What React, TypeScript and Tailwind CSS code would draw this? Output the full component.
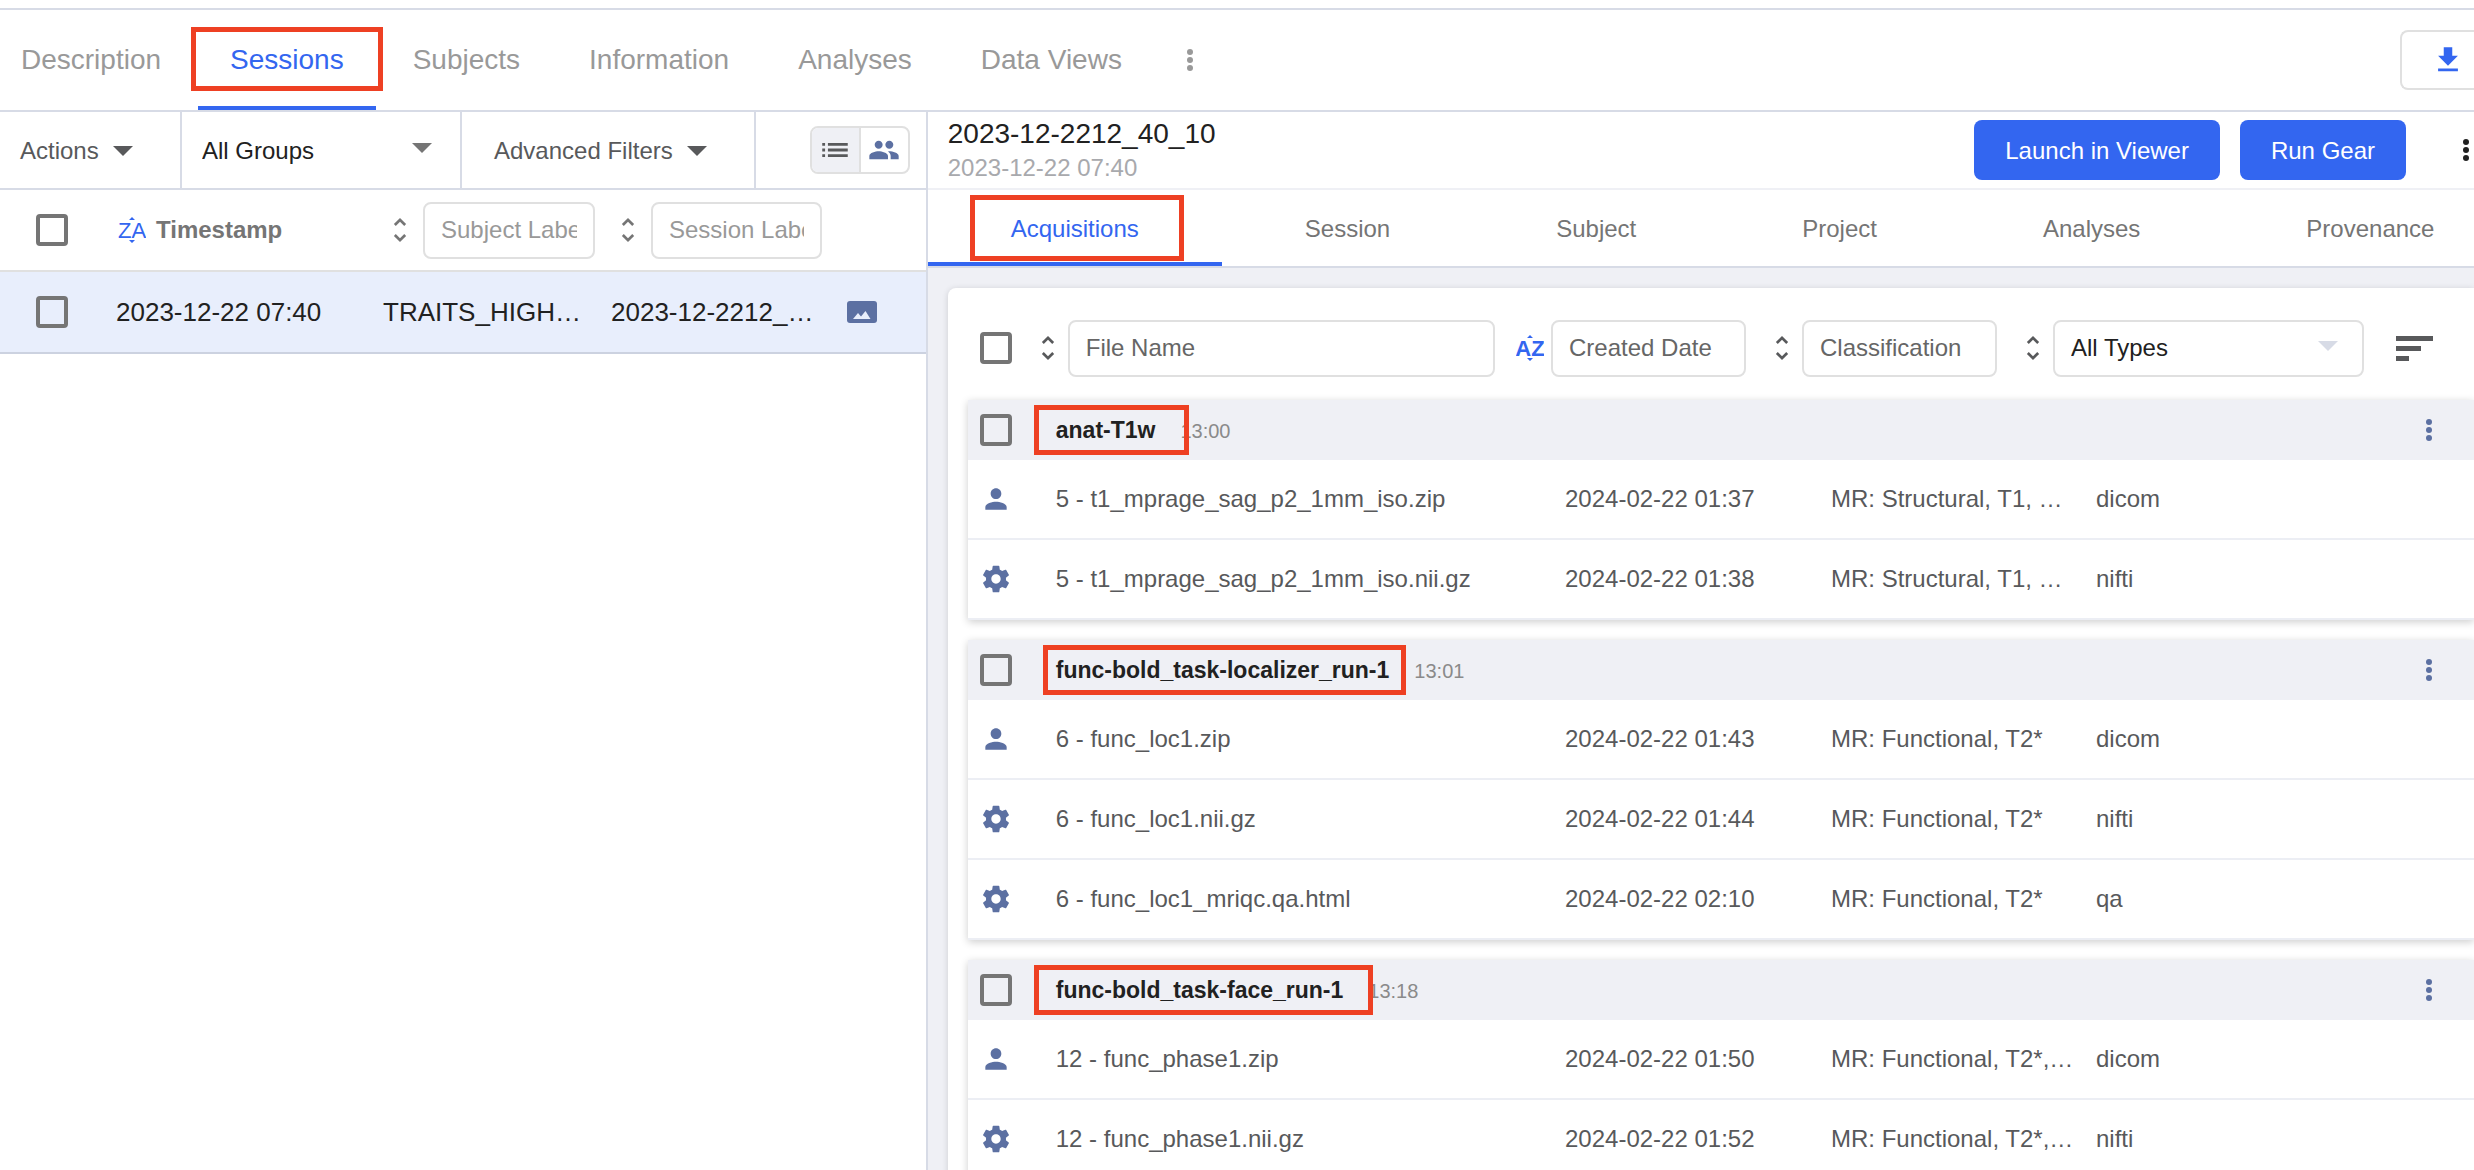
import React from "react";
import { MdList, MdPeople, MdPerson } from "react-icons/md";

type FileRow = {
  source: "user" | "gear";
  name: string;
  created: string;
  classification: string;
  type: string;
};

type Acquisition = {
  label: string;
  time: string;
  mark: string;
  files: FileRow[];
};

const projectTabs = ["Description", "Sessions", "Subjects", "Information", "Analyses", "Data Views"];
const sessionTabs = ["Acquisitions", "Session", "Subject", "Project", "Analyses", "Provenance"];

const acquisitions: Acquisition[] = [
  {
    label: "anat-T1w",
    time: "13:00",
    mark: "-left-[22px] -right-[34px]",
    files: [
      { source: "user", name: "5 - t1_mprage_sag_p2_1mm_iso.zip", created: "2024-02-22 01:37", classification: "MR: Structural, T1, …", type: "dicom" },
      { source: "gear", name: "5 - t1_mprage_sag_p2_1mm_iso.nii.gz", created: "2024-02-22 01:38", classification: "MR: Structural, T1, …", type: "nifti" },
    ],
  },
  {
    label: "func-bold_task-localizer_run-1",
    time: "13:01",
    mark: "-left-[13px] -right-[17px]",
    files: [
      { source: "user", name: "6 - func_loc1.zip", created: "2024-02-22 01:43", classification: "MR: Functional, T2*", type: "dicom" },
      { source: "gear", name: "6 - func_loc1.nii.gz", created: "2024-02-22 01:44", classification: "MR: Functional, T2*", type: "nifti" },
      { source: "gear", name: "6 - func_loc1_mriqc.qa.html", created: "2024-02-22 02:10", classification: "MR: Functional, T2*", type: "qa" },
    ],
  },
  {
    label: "func-bold_task-face_run-1",
    time: "13:18",
    mark: "-left-[22px] -right-[30px]",
    files: [
      { source: "user", name: "12 - func_phase1.zip", created: "2024-02-22 01:50", classification: "MR: Functional, T2*,…", type: "dicom" },
      { source: "gear", name: "12 - func_phase1.nii.gz", created: "2024-02-22 01:52", classification: "MR: Functional, T2*,…", type: "nifti" },
    ],
  },
];

function Dots({ className = "" }: { className?: string }) {
  return (
    <svg viewBox="0 0 8 24" className={`h-6 w-2 fill-current ${className}`} aria-hidden="true">
      <circle cx="4" cy="4" r="3" />
      <circle cx="4" cy="12" r="3" />
      <circle cx="4" cy="20" r="3" />
    </svg>
  );
}

function Caret({ className = "" }: { className?: string }) {
  return (
    <svg viewBox="0 0 20 10" className={`h-[10px] w-5 fill-current ${className}`} aria-hidden="true">
      <path d="M0 0h20L10 10z" />
    </svg>
  );
}

function SortButton({ label, tone }: { label: string; tone: string }) {
  return (
    <button aria-label={label} className={`shrink-0 ${tone}`}>
      <svg viewBox="7 3 10 18" className="h-6 w-[14px] fill-current" aria-hidden="true">
        <path d="M12 5.83L15.17 9l1.41-1.41L12 3 7.41 7.59 8.83 9 12 5.83zm0 12.34L8.83 15l-1.41 1.41L12 21l4.59-4.59L15.17 15 12 18.17z" />
      </svg>
    </button>
  );
}

function AlphaSort({ letters, label, weight }: { letters: string; label: string; weight: string }) {
  return (
    <button aria-label={label} className="shrink-0 text-[#3366f0]">
      <svg viewBox="0 0 28 26" className="h-[26px] w-7 fill-current" aria-hidden="true">
        <path d="M11 3h6l-3-3zM11 23h6l-3 3z" />
        <text x="14" y="21" textAnchor="middle" className={`text-[22px] ${weight}`}>
          {letters}
        </text>
      </svg>
    </button>
  );
}

function Gear() {
  return (
    <svg viewBox="0 0 24 24" className="size-8 fill-current" aria-hidden="true">
      <path d="M19.43 12.98c.04-.32.07-.64.07-.98s-.03-.66-.07-.98l2.11-1.65c.19-.15.24-.42.12-.64l-2-3.46c-.12-.22-.39-.3-.61-.22l-2.49 1c-.52-.4-1.08-.73-1.69-.98l-.38-2.65C14.46 2.18 14.25 2 14 2h-4c-.25 0-.46.18-.49.42l-.38 2.65c-.61.25-1.17.59-1.69.98l-2.49-1c-.23-.09-.49 0-.61.22l-2 3.46c-.13.22-.07.49.12.64l2.11 1.65c-.04.32-.07.65-.07.98s.03.66.07.98l-2.11 1.65c-.19.15-.24.42-.12.64l2 3.46c.12.22.39.3.61.22l2.49-1c.52.4 1.08.73 1.69.98l.38 2.65c.03.24.24.42.49.42h4c.25 0 .46-.18.49-.42l.38-2.65c.61-.25 1.17-.59 1.69-.98l2.49 1c.23.09.49 0 .61-.22l2-3.46c.12-.22.07-.49-.12-.64l-2.11-1.65zM12 15.5c-1.93 0-3.5-1.57-3.5-3.5s1.57-3.5 3.5-3.5 3.5 1.57 3.5 3.5-1.57 3.5-3.5 3.5z" />
    </svg>
  );
}

function Checkbox({ label }: { label: string }) {
  return (
    <input
      type="checkbox"
      aria-label={label}
      className="block size-8 shrink-0 appearance-none rounded border-4 border-[#757575] checked:bg-[#757575]"
    />
  );
}

function FilterInput({ label, className }: { label: string; className: string }) {
  return (
    <input
      type="text"
      aria-label={label}
      placeholder={label}
      className={`h-[57px] rounded-lg border-2 border-[#e0e0e0] bg-white px-4 text-2xl text-[#212121] ${className}`}
    />
  );
}

function TopBar() {
  return (
    <header className="flex h-[104px] shrink-0 items-stretch border-y-2 border-[#d7dbe6]">
      <nav className="flex grow gap-[5px] text-[28px]">
        {projectTabs.map((tab) => {
          const active = tab === "Sessions";
          const first = tab === "Description";
          return (
            <a
              key={tab}
              href="#"
              className={`relative flex items-center border-b-4 pt-1 pr-8 ${first ? "pl-[21px]" : "pl-8"} ${
                active ? "border-[#3366f0] text-[#3366f0]" : "border-transparent text-[#999999]"
              }`}
            >
              {tab}
              {active && (
                <span className="pointer-events-none absolute -inset-x-[7px] top-[17px] h-16 border-5 border-[#ee4023]" />
              )}
            </a>
          );
        })}
        <button aria-label="More tabs" className="ml-[27px] text-[#999999]">
          <Dots />
        </button>
      </nav>
      <button
        aria-label="Download"
        className="flex h-[60px] w-[74px] items-center self-center rounded-l-lg border-2 border-r-0 border-[#e0e0e0] pl-[29px] text-[#3366f0]"
      >
        <svg viewBox="0 0 24 24" className="size-[34px] shrink-0 fill-current" aria-hidden="true">
          <path d="M19 9h-4V3H9v6H5l7 7 7-7zM5 18v2h14v-2H5z" />
        </svg>
      </button>
    </header>
  );
}

function SessionList() {
  return (
    <section className="w-3/8 shrink-0 border-r-2 border-[#d7dbe6]">
      <div className="flex h-[78px] border-b-2 border-[#d7dbe6] text-2xl text-[#58595b]">
        <button className="flex w-[182px] items-center gap-[14px] border-r-2 border-[#d7dbe6] pt-0.5 pl-5">
          Actions <Caret />
        </button>
        <label className="grid w-[280px] items-center border-r-2 border-[#d7dbe6]">
          <select
            aria-label="Group filter"
            className="col-start-1 row-start-1 h-full appearance-none bg-transparent pt-0.5 pl-5 text-[#212121]"
          >
            <option>All Groups</option>
          </select>
          <Caret className="pointer-events-none col-start-1 row-start-1 mr-7 mb-1 justify-self-end text-[#757575]" />
        </label>
        <button className="flex w-[294px] items-center gap-[14px] border-r-2 border-[#d7dbe6] pt-0.5 pl-8">
          Advanced Filters <Caret />
        </button>
        <div className="flex grow items-center justify-end pr-4">
          <div className="flex h-12 overflow-hidden rounded-lg border-2 border-[#e0e0e0]">
            <button aria-label="List view" className="flex w-[49px] items-center justify-center border-r-2 border-[#e0e0e0] bg-[#eff0f5]">
              <MdList className="size-[34px]" />
            </button>
            <button aria-label="Subject view" className="flex w-[47px] items-center justify-center text-[#5c70a2]">
              <MdPeople className="size-8" />
            </button>
          </div>
        </div>
      </div>

      <table className="w-full table-fixed border-separate border-spacing-0 text-left">
        <colgroup>
          <col className="w-[116px]" />
          <col className="w-[267px]" />
          <col className="w-[228px]" />
          <col className="w-[236px]" />
          <col />
        </colgroup>
        <thead>
          <tr className="h-[82px] *:border-b-2 *:border-[#e0e0e0]">
            <th className="pl-9">
              <Checkbox label="Select all sessions" />
            </th>
            <th>
              <div className="flex items-center gap-[10px] pl-[2px] text-2xl text-[#757575]">
                <AlphaSort letters="ZA" label="Sort by timestamp" weight="font-normal" />
                Timestamp
              </div>
            </th>
            <th>
              <div className="flex items-center gap-4 pl-[10px] font-normal">
                <SortButton label="Sort by subject" tone="text-[#757575]" />
                <FilterInput label="Subject Label" className="w-[172px] placeholder:text-[#999999]" />
              </div>
            </th>
            <th>
              <div className="flex items-center gap-4 pl-[10px] font-normal">
                <SortButton label="Sort by session" tone="text-[#757575]" />
                <FilterInput label="Session Label" className="w-[171px] placeholder:text-[#999999]" />
              </div>
            </th>
            <th />
          </tr>
        </thead>
        <tbody>
          <tr className="h-[82px] bg-[#e8eefc] text-[26px] whitespace-nowrap text-[#212121] *:border-b-2 *:border-[#ccd2e0]">
            <td className="pl-9">
              <Checkbox label="Select session 2023-12-2212_40_10" />
            </td>
            <td>2023-12-22 07:40</td>
            <td>TRAITS_HIGH…</td>
            <td>2023-12-2212_…</td>
            <td>
              <svg viewBox="0 0 30 22" className="h-[22px] w-[30px]" aria-label="Has images">
                <rect width="30" height="22" rx="3" fill="#5c70a2" />
                <path d="M6 18l5-6 3 3.500 4.500-5.500 5 8z" fill="#e8eefc" />
              </svg>
            </td>
          </tr>
        </tbody>
      </table>
    </section>
  );
}

function FileFilters() {
  return (
    <div className="flex h-28 items-center pt-2 pr-[41px] pl-8 text-[#58595b]">
      <Checkbox label="Select all files" />
      <div className="ml-[29px] flex grow items-center gap-[13px]">
        <SortButton label="Sort by file name" tone="text-[#58595b]" />
        <FilterInput label="File Name" className="min-w-0 grow placeholder:text-[#666666]" />
      </div>
      <div className="ml-[21px] flex items-center gap-[7px]">
        <AlphaSort letters="AZ" label="Sort by created date" weight="font-bold" />
        <FilterInput label="Created Date" className="w-[195px] placeholder:text-[#666666]" />
      </div>
      <div className="ml-[29px] flex items-center gap-[13px]">
        <SortButton label="Sort by classification" tone="text-[#58595b]" />
        <FilterInput label="Classification" className="w-[195px] placeholder:text-[#666666]" />
      </div>
      <div className="ml-[29px] flex items-center gap-[13px]">
        <SortButton label="Sort by type" tone="text-[#58595b]" />
        <label className="grid w-[311px] items-center">
          <select
            aria-label="File type"
            className="col-start-1 row-start-1 h-[57px] appearance-none rounded-lg border-2 border-[#e0e0e0] bg-white px-4 text-2xl text-[#212121]"
          >
            <option>All Types</option>
          </select>
          <Caret className="pointer-events-none col-start-1 row-start-1 mr-[26px] mb-1 justify-self-end text-[#d7dbe6]" />
        </label>
      </div>
      <button aria-label="Sort options" className="ml-8">
        <svg viewBox="0 0 37 25" className="h-[25px] w-[37px] fill-current" aria-hidden="true">
          <path d="M0 0h37v5H0zM0 10h25v5H0zM0 20h13v5H0z" />
        </svg>
      </button>
    </div>
  );
}

function AcquisitionGroup({ group }: { group: Acquisition }) {
  return (
    <section className="mb-5 ml-5 shadow-[0_2px_8px_rgba(0,0,0,0.2)]">
      <div className="flex h-[60px] items-center bg-[#eff0f5] pr-[41px] pl-3">
        <Checkbox label={`Select ${group.label}`} />
        <div className="ml-11 flex grow items-baseline gap-[25px]">
          <h2 className="relative text-[23px] font-bold text-[#212121]">
            {group.label}
            <span className={`pointer-events-none absolute -inset-y-2 border-5 border-[#ee4023] ${group.mark}`} />
          </h2>
          <span className="text-xl text-[#8a8a8a]">{group.time}</span>
        </div>
        <button aria-label={`${group.label} menu`} className="text-[#5c70a2]">
          <Dots />
        </button>
      </div>
      <table className="w-full table-fixed border-separate border-spacing-0 bg-white text-2xl whitespace-nowrap text-[#58595b]">
        <colgroup>
          <col className="w-[88px]" />
          <col />
          <col className="w-[266px]" />
          <col className="w-[265px]" />
          <col className="w-[378px]" />
        </colgroup>
        <tbody>
          {group.files.map((file) => (
            <tr key={file.name} className="h-20 *:border-b-2 *:border-[#eceef4]">
              <td className="pl-3 text-[#5c70a2]">
                {file.source === "user" ? <MdPerson className="size-8" /> : <Gear />}
              </td>
              <td>{file.name}</td>
              <td>{file.created}</td>
              <td>{file.classification}</td>
              <td>{file.type}</td>
            </tr>
          ))}
        </tbody>
      </table>
    </section>
  );
}

function SessionDetail() {
  return (
    <section className="flex min-w-0 grow flex-col">
      <div className="flex h-[78px] shrink-0 items-center border-b-2 border-[#eff0f5] pr-1 pl-5">
        <div className="grow">
          <h1 className="text-[28px] leading-9 text-[#212121]">2023-12-2212_40_10</h1>
          <p className="text-2xl leading-8 text-[#a8a9ad]">2023-12-22 07:40</p>
        </div>
        <div className="flex gap-5 text-2xl text-white">
          <button className="h-[60px] rounded-lg bg-[#3366f0] px-[31px] pt-0.5">Launch in Viewer</button>
          <button className="h-[60px] rounded-lg bg-[#3366f0] px-[31px] pt-0.5">Run Gear</button>
        </div>
        <button aria-label="Session menu" className="ml-14 text-[#212121]">
          <Dots />
        </button>
      </div>

      <nav className="flex h-[78px] shrink-0 overflow-hidden border-b-2 border-[#d7dbe6] text-2xl">
        {sessionTabs.map((tab) => {
          const active = tab === "Acquisitions";
          return (
            <a
              key={tab}
              href="#"
              className={`relative flex shrink-0 items-center border-b-4 px-[83px] pt-1.5 ${
                active ? "border-[#3366f0] text-[#3366f0]" : "border-transparent text-[#757575]"
              }`}
            >
              {tab}
              {active && (
                <span className="pointer-events-none absolute top-[5px] right-[38px] left-[42px] h-[66px] border-5 border-[#ee4023]" />
              )}
            </a>
          );
        })}
      </nav>

      <div className="min-h-0 grow overflow-hidden bg-[#eff0f5] pt-5 pl-5">
        <div className="min-h-full rounded-tl-lg bg-white shadow-[0_1px_6px_rgba(0,0,0,0.15)]">
          <FileFilters />
          {acquisitions.map((group) => (
            <AcquisitionGroup key={group.label} group={group} />
          ))}
        </div>
      </div>
    </section>
  );
}

export default function App() {
  return (
    <div className="flex h-screen flex-col overflow-hidden bg-white pt-2 font-['Liberation_Sans',Arial,sans-serif]">
      <TopBar />
      <main className="flex min-h-0 grow">
        <SessionList />
        <SessionDetail />
      </main>
    </div>
  );
}
